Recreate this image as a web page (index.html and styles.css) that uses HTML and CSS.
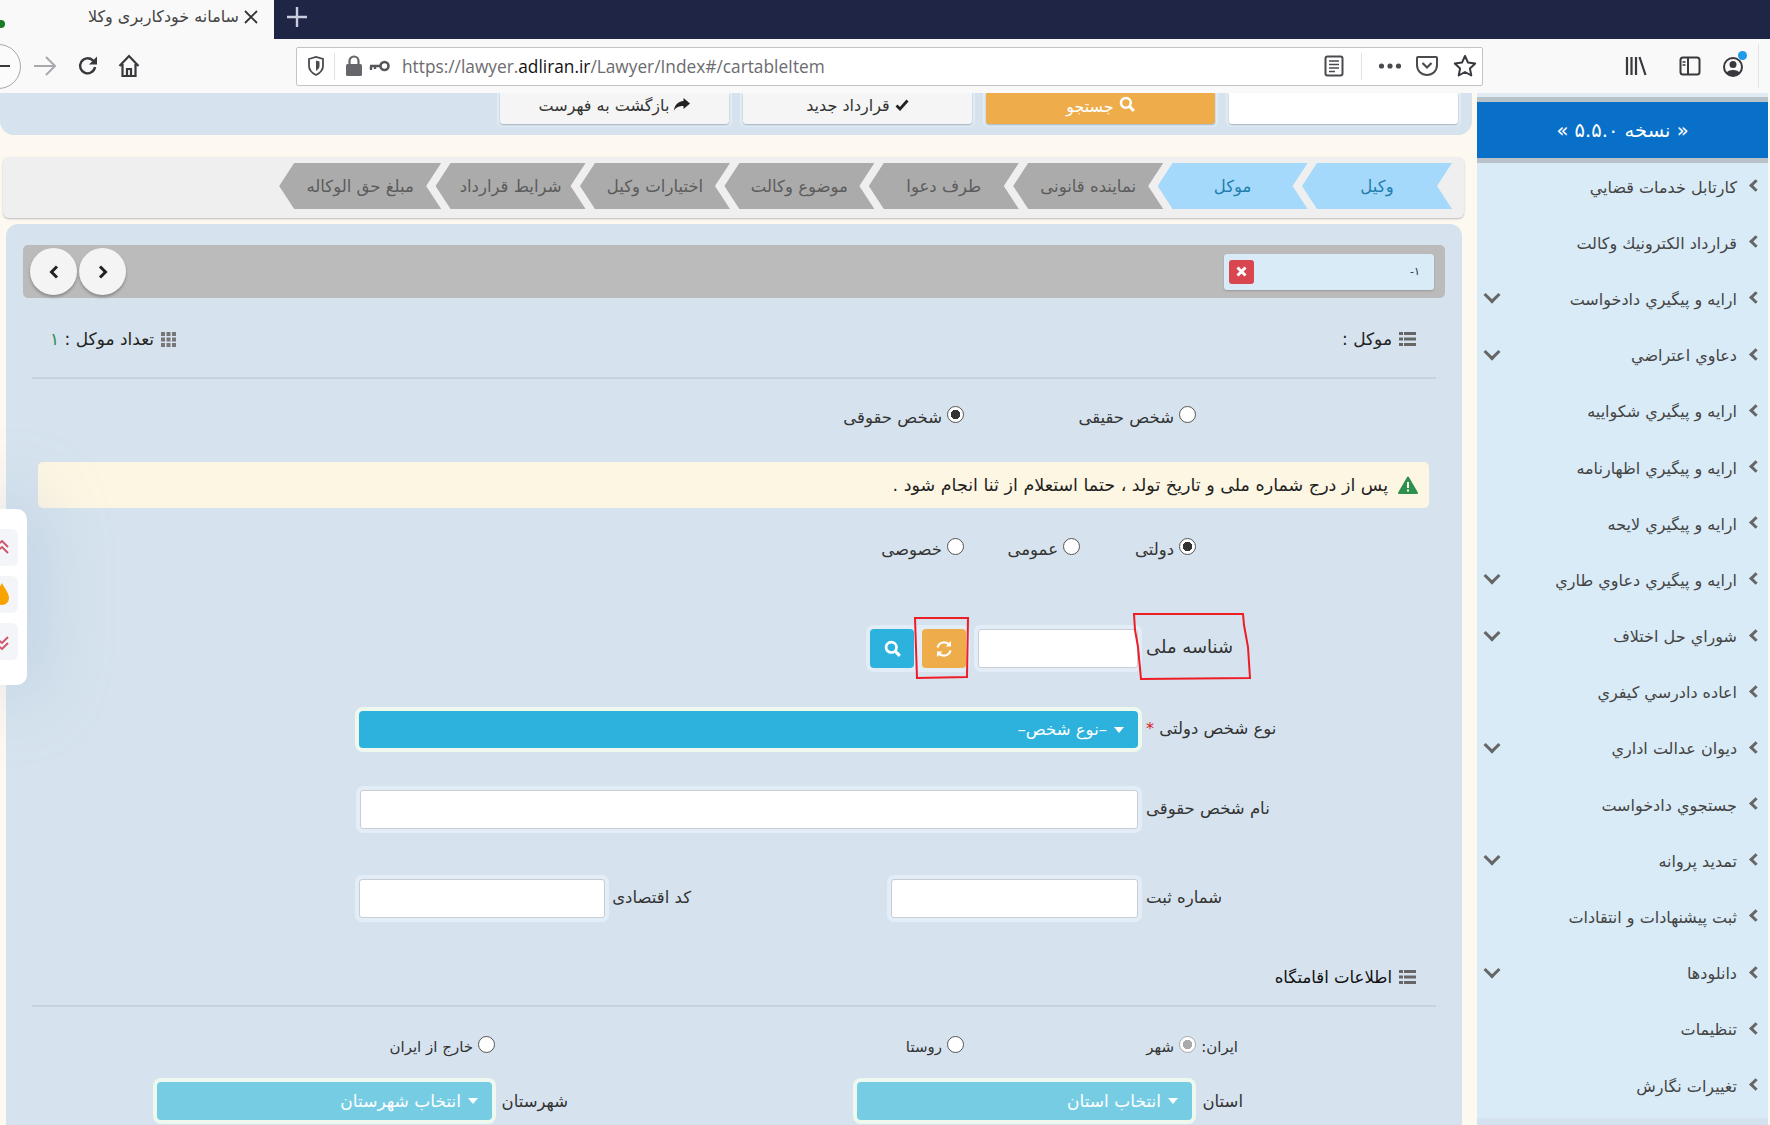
FILE: index.html
```html
<!DOCTYPE html>
<html lang="fa">
<head>
    <meta charset="UTF-8">
    <meta name="viewport" content="width=device-width, initial-scale=1.0">
    <title>سامانه خودکاربری وکلا</title>
    <link rel="stylesheet" href="styles.css">
</head>
<body>
    <div class="tabbar">
        <div class="tab">
            <span class="tab-title">سامانه خودکاربری وکلا</span>
            <svg class="tab-close" width="14" height="14" viewBox="0 0 14 14"><path d="M1 1l12 12M13 1L1 13" stroke="#333" stroke-width="1.8"/></svg>
            <span class="tab-favicon"></span>
        </div>
        <svg class="tab-new" width="20" height="20" viewBox="0 0 20 20"><path d="M10 0v20M0 10h20" stroke="#c9cede" stroke-width="2.4"/></svg>
    </div>

    <div class="toolbar">
        <div class="back-btn"><span class="back-dash"></span></div>
        <svg class="tool-forward" width="24" height="20" viewBox="0 0 24 20"><path d="M1 10h21M13 1l9 9-9 9" fill="none" stroke="#a9a9ad" stroke-width="2"/></svg>
        <svg class="tool-reload" width="22" height="22" viewBox="0 0 22 22"><path d="M18 12a7.5 7.5 0 1 1-2.2-6.6L18.500 8" fill="none" stroke="#38383d" stroke-width="2.400"/><path d="M20 1.500v8h-8z" fill="#38383d"/></svg>
        <svg class="tool-home" width="22" height="24" viewBox="0 0 22 24"><path d="M1.500 12L11 2l9.500 10M4.500 10v12h13V10M9 22v-7h4v7" fill="none" stroke="#38383d" stroke-width="2.200"/></svg>
        <div class="urlbar">
            <svg class="url-shield" width="16" height="20" viewBox="0 0 16 20"><path d="M1 3l7-2 7 2v7c0 4-3 7-7 9-4-2-7-5-7-9z" fill="none" stroke="#4a4a4f" stroke-width="1.800"/><path d="M8 4.500l3.500 1v4.500c0 2-1.500 3.500-3.500 5z" fill="#4a4a4f"/></svg>
            <span class="url-sep url-sep-left"></span>
            <svg class="url-lock" width="18" height="22" viewBox="0 0 18 22"><path d="M4.500 10V6a4.500 4.500 0 0 1 9 0v4" fill="none" stroke="#66666b" stroke-width="2.200"/><rect x="1" y="9" width="16" height="12" rx="1.500" fill="#66666b"/></svg>
            <svg class="url-key" width="22" height="12" viewBox="0 0 22 12"><circle cx="15.500" cy="6" r="4" fill="none" stroke="#55555a" stroke-width="2.600"/><path d="M11 6H1M2 6v4M6 6v3" stroke="#55555a" stroke-width="2.400" fill="none"/></svg>
            <span class="url-text">https://lawyer.<b>adliran.ir</b>/Lawyer/Index#/cartableItem</span>
            <svg class="url-reader" width="20" height="22" viewBox="0 0 20 22"><rect x="1.500" y="1.500" width="17" height="19" rx="2" fill="none" stroke="#4a4a4f" stroke-width="2"/><path d="M5 6h10M5 9.500h10M5 13h10M5 16.500h6" stroke="#4a4a4f" stroke-width="1.600"/></svg>
            <span class="url-sep url-sep-right"></span>
            <svg class="url-dots" width="24" height="6" viewBox="0 0 24 6"><circle cx="3.500" cy="3" r="2.600" fill="#4a4a4f"/><circle cx="12" cy="3" r="2.600" fill="#4a4a4f"/><circle cx="20.500" cy="3" r="2.600" fill="#4a4a4f"/></svg>
            <svg class="url-pocket" width="22" height="22" viewBox="0 0 22 22"><path d="M2 2h18a1 1 0 0 1 1 1v7c0 6-4.500 10-10 10S1 16 1 10V3a1 1 0 0 1 1-1z" fill="none" stroke="#4a4a4f" stroke-width="2"/><path d="M6.500 8l4.500 4.500L15.500 8" fill="none" stroke="#4a4a4f" stroke-width="2.200"/></svg>
            <svg class="url-star" width="24" height="24" viewBox="0 0 24 24"><path d="M12 2l3 6.600 7.200.9-5.300 4.900 1.400 7.100L12 18l-6.300 3.500 1.400-7.100L1.800 9.500 9 8.600z" fill="none" stroke="#38383d" stroke-width="2" stroke-linejoin="round"/></svg>
        </div>
        <svg class="tool-library" width="22" height="22" viewBox="0 0 22 22"><path d="M2 2v18M6.500 2v18M11 2v18M14.500 2l6 18" fill="none" stroke="#38383d" stroke-width="2.200"/></svg>
        <svg class="tool-sidebar" width="22" height="22" viewBox="0 0 22 22"><rect x="1.500" y="2.500" width="19" height="17" rx="2.500" fill="none" stroke="#38383d" stroke-width="2"/><path d="M9 3v16" stroke="#38383d" stroke-width="2"/><path d="M3.500 7h3M3.500 10h3" stroke="#38383d" stroke-width="1.400"/></svg>
        <div class="tool-account">
            <svg width="22" height="24" viewBox="0 0 22 24"><circle cx="11" cy="13" r="9" fill="none" stroke="#38383d" stroke-width="2"/><circle cx="11" cy="10.500" r="3.500" fill="#38383d"/><path d="M4.500 19c1-4 12-4 13 0-3 3-10 3-13 0z" fill="#38383d"/></svg>
            <span class="account-dot"></span>
        </div>
        <span class="tool-sep"></span>
    </div>

    <div class="page">
        <div class="content">
            <div class="top-actions">
                <input class="top-input" type="text">
                <button class="top-btn top-btn-orange"><svg class="ico-search" width="16" height="16" viewBox="0 0 14 14"><circle cx="6" cy="6" r="4.300" fill="none" stroke="#fff" stroke-width="2.200"/><path d="M9 9l4 4" stroke="#fff" stroke-width="2.600"/></svg> جستجو</button>
                <button class="top-btn"><svg width="14" height="12" viewBox="0 0 14 12"><path d="M1.500 6.500l3.500 3.500 7.500-8.500" fill="none" stroke="#222" stroke-width="2.800"/></svg> قرارداد جدید</button>
                <button class="top-btn"><svg width="16" height="13" viewBox="0 0 16 13"><path d="M9.500 0L16 5.500 9.500 11V8C5 8 2.500 9 0 12.500 .5 7 4 3.500 9.500 3z" fill="#222"/></svg> بازگشت به فهرست</button>
            </div>

            <div class="steps">
                <div class="step step-done">وکیل</div>
                <div class="step step-done">موکل</div>
                <div class="step">نماینده قانونی</div>
                <div class="step">طرف دعوا</div>
                <div class="step">موضوع وکالت</div>
                <div class="step">اختیارات وکیل</div>
                <div class="step">شرایط قرارداد</div>
                <div class="step">مبلغ حق الوکاله</div>
            </div>

            <div class="panel">
                <div class="pager">
                    <div class="chip">
                        <span class="chip-text">۱-</span>
                        <span class="chip-remove"><svg width="11" height="11" viewBox="0 0 11 11"><path d="M1.500 1.500l8 8M9.500 1.500l-8 8" stroke="#fff" stroke-width="3"/></svg></span>
                    </div>
                    <div class="pager-nav">
                        <button class="round-btn"><svg width="10" height="14" viewBox="0 0 10 14"><path d="M2 1.500L7.500 7 2 12.500" fill="none" stroke="#222" stroke-width="3"/></svg></button>
                        <button class="round-btn"><svg width="10" height="14" viewBox="0 0 10 14"><path d="M8 1.500L2.500 7 8 12.500" fill="none" stroke="#222" stroke-width="3"/></svg></button>
                    </div>
                </div>

                <div class="section-head section-head-first">
                    <div class="head-title">
                        <svg width="17" height="14" viewBox="0 0 17 14"><path d="M0 0h4v3H0zM5 0h12v3H5zM0 5.500h4v3H0zM5 5.500h12v3H5zM0 11h4v3H0zM5 11h12v3H5z" fill="#666"/></svg>
                        <span>موکل :</span>
                    </div>
                    <div class="head-title">
                        <svg width="15" height="15" viewBox="0 0 15 15"><path d="M0 0h4v4H0zM5.500 0h4v4h-4zM11 0h4v4h-4zM0 5.500h4v4H0zM5.500 5.500h4v4h-4zM11 5.500h4v4h-4zM0 11h4v4H0zM5.500 11h4v4h-4zM11 11h4v4h-4z" fill="#777"/></svg>
                        <span>تعداد موکل : <em class="count">۱</em></span>
                    </div>
                </div>

                <div class="radio-row radio-row-person">
                    <label class="radio-opt"><input type="radio" name="person"> شخص حقیقی</label>
                    <label class="radio-opt"><input type="radio" name="person" checked> شخص حقوقی</label>
                </div>

                <div class="alert">
                    <svg width="20" height="18" viewBox="0 0 20 18"><path d="M10 1.500L19 17H1z" fill="#2f8f4e" stroke="#2f8f4e" stroke-width="2" stroke-linejoin="round"/><path d="M10 6v6M10 13.500v2" stroke="#fdf6e3" stroke-width="2"/></svg>
                    <span>پس از درج شماره ملی و تاریخ تولد ، حتما استعلام از ثنا انجام شود .</span>
                </div>

                <div class="radio-row radio-row-kind">
                    <label class="radio-opt"><input type="radio" name="kind" checked> دولتی</label>
                    <label class="radio-opt"><input type="radio" name="kind"> عمومی</label>
                    <label class="radio-opt"><input type="radio" name="kind"> خصوصی</label>
                </div>

                <div class="form-row form-row-id">
                    <label class="field-label">شناسه ملی</label>
                    <input class="field-input field-id" type="text">
                    <div class="id-actions">
                        <button class="square-btn square-orange"><svg width="18" height="18" viewBox="0 0 18 18"><path d="M2.500 7.500A6.800 6.800 0 0 1 14.500 5M15.500 10.500A6.800 6.800 0 0 1 3.500 13" fill="none" stroke="#fff" stroke-width="2.200"/><path d="M16 1v5.500h-5.500zM2 17v-5.500h5.500z" fill="#fff"/></svg></button>
                        <button class="square-btn square-blue"><svg width="17" height="17" viewBox="0 0 14 14"><circle cx="6" cy="6" r="4.300" fill="none" stroke="#fff" stroke-width="2.200"/><path d="M9 9l4 4" stroke="#fff" stroke-width="2.600"/></svg></button>
                    </div>
                </div>

                <div class="form-row form-row-type">
                    <label class="field-label">نوع شخص دولتی <i class="required">*</i></label>
                    <div class="select select-main"><span class="caret"></span> –نوع شخص–</div>
                </div>

                <div class="form-row form-row-name">
                    <label class="field-label">نام شخص حقوقی</label>
                    <input class="field-input field-full" type="text">
                </div>

                <div class="form-row form-row-reg">
                    <label class="field-label">شماره ثبت</label>
                    <input class="field-input field-half" type="text">
                    <label class="label-eco">کد اقتصادی</label>
                    <input class="field-input field-eco" type="text">
                </div>

                <div class="section-head section-head-address">
                    <div class="head-title">
                        <svg width="17" height="14" viewBox="0 0 17 14"><path d="M0 0h4v3H0zM5 0h12v3H5zM0 5.500h4v3H0zM5 5.500h12v3H5zM0 11h4v3H0zM5 11h12v3H5z" fill="#666"/></svg>
                        <span class="head-strong">اطلاعات اقامتگاه</span>
                    </div>
                </div>

                <div class="radio-row radio-row-place">
                    <span class="place-label">ایران:</span>
                    <label class="radio-opt"><input class="radio-muted" type="radio" name="place" checked> شهر</label>
                    <label class="radio-opt"><input type="radio" name="place"> روستا</label>
                    <label class="radio-opt"><input type="radio" name="place"> خارج از ایران</label>
                </div>

                <div class="form-row form-row-city">
                    <label class="label-province">استان</label>
                    <div class="select select-light"><span class="caret"></span> انتخاب استان</div>
                    <label class="label-county">شهرستان</label>
                    <div class="select select-light"><span class="caret"></span> انتخاب شهرستان</div>
                </div>
            </div>
        </div>

        <aside class="sidebar">
            <div class="version">« نسخه ۵.۵.۰ »</div>
            <ul class="menu">
                <li class="menu-item"><span class="menu-chev"></span><span>كارتابل خدمات قضايي</span></li>
                <li class="menu-item"><span class="menu-chev"></span><span>قرارداد الكترونيك وكالت</span></li>
                <li class="menu-item has-sub"><span class="menu-chev"></span><span>ارايه و پيگيري دادخواست</span></li>
                <li class="menu-item has-sub"><span class="menu-chev"></span><span>دعاوي اعتراضي</span></li>
                <li class="menu-item"><span class="menu-chev"></span><span>ارايه و پيگيري شكواييه</span></li>
                <li class="menu-item"><span class="menu-chev"></span><span>ارايه و پيگيري اظهارنامه</span></li>
                <li class="menu-item"><span class="menu-chev"></span><span>ارايه و پيگيري لايحه</span></li>
                <li class="menu-item has-sub"><span class="menu-chev"></span><span>ارايه و پيگيري دعاوي طاري</span></li>
                <li class="menu-item has-sub"><span class="menu-chev"></span><span>شوراي حل اختلاف</span></li>
                <li class="menu-item"><span class="menu-chev"></span><span>اعاده دادرسي كيفري</span></li>
                <li class="menu-item has-sub"><span class="menu-chev"></span><span>ديوان عدالت اداري</span></li>
                <li class="menu-item"><span class="menu-chev"></span><span>جستجوي دادخواست</span></li>
                <li class="menu-item has-sub"><span class="menu-chev"></span><span>تمديد پروانه</span></li>
                <li class="menu-item"><span class="menu-chev"></span><span>ثبت پيشنهادات و انتقادات</span></li>
                <li class="menu-item has-sub"><span class="menu-chev"></span><span>دانلودها</span></li>
                <li class="menu-item"><span class="menu-chev"></span><span>تنظيمات</span></li>
                <li class="menu-item"><span class="menu-chev"></span><span>تغييرات نگارش</span></li>
            </ul>
        </aside>
    </div>

    <!-- floating shortcuts, cut off by the window edge -->
    <div class="float-card">
        <div class="float-tile"><svg width="14" height="18" viewBox="0 0 14 18"><path d="M0 8l7-6 6 6M0 14l7-6 6 6" fill="none" stroke="#d0566a" stroke-width="2"/></svg></div>
        <div class="float-tile"><svg width="14" height="24" viewBox="0 0 14 24"><path d="M7 0c3 6 7 10 7 15a7 7 0 0 1-14 0c0-5 4-9 7-15z" fill="#f9a300"/></svg></div>
        <div class="float-tile"><svg width="14" height="18" viewBox="0 0 14 18"><path d="M0 4l7 6 6-6M0 10l7 6 6-6" fill="none" stroke="#d0566a" stroke-width="2"/></svg></div>
    </div>

    <!-- red marks someone drew on the screenshot -->
    <svg class="marks" width="1770" height="1125" viewBox="0 0 1770 1125">
        <path d="M915 618L968 618 967 677 917 678z" fill="none" stroke="#ee1c25" stroke-width="2"/>
        <path d="M1134 614L1243 614 1244 625 1248 647 1250 678 1141 679 1138 647 1135 630z" fill="none" stroke="#ee1c25" stroke-width="2"/>
    </svg>
</body>
</html>
```

FILE: styles.css
```css
* {
    box-sizing: border-box;
}

html, body {
    margin: 0;
    height: 1125px;
    overflow: hidden;
}

body {
    position: relative;
    background-color: #fdf8f0;
    color: #333;
    font-family: "DejaVu Sans", sans-serif;
    font-size: 16px;
}

button, input {
    font-family: inherit;
}

/* browser chrome */
.tabbar {
    display: flex;
    align-items: center;
    height: 39px;
    padding-bottom: 6px;
    background: #1f2544;
}

.tab {
    display: flex;
    align-items: center;
    position: relative;
    width: 274px;
    height: 39px;
    margin-bottom: -6px;
    padding: 0 0 6px 92px;
    background: #f9f9fa;
}

.tab-title {
    width: 147px;
    font-size: 16px;
    color: #444;
    direction: rtl;
    white-space: nowrap;
}

.tab-close {
    margin-left: 5px;
}

.tab-favicon {
    position: absolute;
    left: -3px;
    top: 20px;
    width: 8px;
    height: 8px;
    border-radius: 50%;
    background: #1c7a25;
}

.tab-new {
    margin-left: 13px;
}

.toolbar {
    display: flex;
    align-items: center;
    height: 54px;
    background: #f9f9fa;
}

.back-btn {
    display: flex;
    align-items: center;
    justify-content: flex-end;
    flex: none;
    width: 45px;
    height: 45px;
    margin-left: -24px;
    padding-right: 10px;
    border: 1px solid #a8a8ac;
    border-radius: 50%;
    background: #fbfbfc;
}

.back-dash {
    width: 11px;
    height: 2px;
    background: #38383d;
}

.tool-forward {
    margin-left: 12px;
}

.tool-reload {
    margin-left: 20px;
}

.tool-home {
    margin-left: 19px;
}

.urlbar {
    display: flex;
    align-items: center;
    width: 1187px;
    height: 39px;
    margin-left: 156px;
    padding-left: 11px;
    border: 1px solid #c4c4c8;
    border-radius: 2px;
    background: #fff;
}

.url-sep {
    flex: none;
    width: 1px;
    height: 27px;
    background: #e2e2e4;
}

.url-sep-left {
    margin-left: 10px;
}

.url-sep-right {
    margin-left: 17px;
}

.url-lock {
    margin-left: 10px;
}

.url-key {
    margin-left: 6px;
}

.url-text {
    margin-left: 11px;
    width: 922px;
    font-family: "Open Sans", sans-serif;
    font-size: 17.300px;
    color: #6b6b70;
    white-space: nowrap;
}

.url-text b {
    font-weight: 400;
    color: #111;
}

.url-dots {
    margin-left: 16px;
}

.url-pocket {
    margin-left: 14px;
}

.url-star {
    margin-left: 15px;
}

.tool-library {
    margin-left: 142px;
}

.tool-sidebar {
    margin-left: 32px;
}

.tool-account {
    position: relative;
    display: flex;
    margin-left: 21px;
}

.account-dot {
    position: absolute;
    right: -3px;
    top: -3px;
    width: 9px;
    height: 9px;
    border-radius: 50%;
    background: #1e9be8;
}

.tool-sep {
    width: 1px;
    height: 44px;
    margin-left: 14px;
    background: #e4e4e6;
}

/* page */
.page {
    display: flex;
    height: 1032px;
    overflow: hidden;
}

.content {
    width: 1477px;
    flex: none;
}

.top-actions {
    display: flex;
    direction: rtl;
    gap: 14px;
    width: 1472px;
    height: 42px;
    padding-right: 14px;
    background: #d6e3ee;
    border-radius: 0 0 14px 14px;
}

.top-input, .top-btn {
    width: 229px;
    height: 31px;
    border: 0;
    border-radius: 0 0 3px 3px;
    box-shadow: 0 1px 2px #9fb0bf, 0 0 0 3px #e3edf6;
}

.top-input {
    background: #fff;
}

.top-btn {
    padding: 0 0 6px;
    background: #f5f5f5;
    color: #333;
    font-size: 16px;
}

.top-btn-orange {
    background: #efac4a;
    color: #fff;
}

.steps {
    display: flex;
    direction: rtl;
    width: 1461px;
    height: 61px;
    margin: 22px 0 0 3px;
    padding: 6px 12px 0 0;
    background: #efefef;
    border-radius: 6px;
    box-shadow: 0 1px 2px #bbb;
    font-size: 16.500px;
}

.step {
    flex: none;
    display: flex;
    align-items: center;
    justify-content: center;
    width: 150px;
    height: 46px;
    margin-left: -5.600px;
    background: #ababab;
    color: #5b5b5b;
    clip-path: polygon(15px 0, 100% 0, calc(100% - 15px) 50%, 100% 100%, 15px 100%, 0 50%);
}

.step:last-child {
    width: 162px;
}

.step-done {
    background: #a5d9fb;
    color: #1f7fae;
}

.panel {
    width: 1456px;
    height: 901px;
    margin: 6px 0 0 6px;
    padding: 21px 17px 0;
    background: #d6e3ee;
    border-radius: 12px 12px 0 0;
    direction: rtl;
}

.pager {
    display: flex;
    justify-content: space-between;
    align-items: center;
    height: 53px;
    padding: 0 11px 0 7px;
    background: #bbb;
    border-radius: 5px;
}

.chip {
    display: flex;
    align-items: center;
    justify-content: space-between;
    width: 210px;
    height: 36px;
    padding: 0 14px 0 5px;
    background: #d9ebf7;
    border-radius: 3px;
    box-shadow: 0 1px 2px #999;
    font-size: 11px;
}

.chip-remove {
    display: flex;
    align-items: center;
    justify-content: center;
    width: 25px;
    height: 24px;
    background: #d9464f;
    border-radius: 3px;
}

.pager-nav {
    display: flex;
    gap: 2px;
}

.round-btn {
    display: flex;
    align-items: center;
    justify-content: center;
    width: 47px;
    height: 47px;
    padding: 0;
    border: 0;
    border-radius: 50%;
    background: #f4f4f4;
    box-shadow: 0 2px 3px #888;
}

.section-head {
    display: flex;
    justify-content: space-between;
    margin: 0 9px;
    padding: 0 20px 0 18px;
    border-bottom: 2px solid #c5d3e0;
}

.section-head-first {
    margin-top: 22px;
    padding-bottom: 19px;
    height: 59px;
}

.section-head-address {
    margin-top: 40px;
    height: 49px;
    padding-bottom: 11px;
}

.head-title {
    display: flex;
    align-items: center;
    gap: 7px;
    height: 38px;
    color: #222;
    font-size: 17px;
}

.head-strong {
    font-size: 16.500px;
    color: #111;
}

.count {
    font-style: normal;
    color: #2f8f4e;
}

.radio-row {
    display: flex;
    align-items: flex-start;
    height: 24px;
    font-size: 16.500px;
}

.radio-row-person {
    margin-top: 29px;
    padding-right: 249px;
}

.radio-row-person .radio-opt {
    width: 232px;
}

.radio-row-kind {
    margin-top: 32px;
    padding-right: 249px;
}

.radio-row-kind .radio-opt {
    width: 116px;
}

.radio-row-place {
    margin-top: 31px;
    padding-right: 207px;
    font-size: 15px;
}

.place-label {
    width: 42px;
    white-space: nowrap;
}

.radio-row-place .radio-opt {
    width: 232px;
}

.radio-row-place .radio-opt:last-child {
    width: 200px;
    margin-right: 237px;
}

.radio-opt {
    display: flex;
    align-items: flex-start;
    gap: 5px;
    white-space: nowrap;
}

.radio-opt input {
    appearance: none;
    flex: none;
    width: 17px;
    height: 17px;
    margin: -2px 0 0;
    border: 1.500px solid #555;
    border-radius: 50%;
    background: #fff;
}

.radio-opt input:checked {
    background: radial-gradient(circle, #333 0 4.500px, #fff 5px);
}

.radio-opt input.radio-muted {
    border-color: #aaa;
    background: radial-gradient(circle, #aaa 0 4.500px, #fff 5px);
}

.alert {
    display: flex;
    align-items: center;
    gap: 10px;
    height: 46px;
    margin: 30px 16px 0 15px;
    padding-right: 11px;
    background: #fdf6e3;
    border-radius: 5px;
    color: #222;
    font-size: 17.500px;
}

.form-row {
    display: flex;
    align-items: center;
    padding-right: 155px;
    font-size: 16.500px;
}

.field-label {
    width: 144px;
    margin-left: 8px;
    padding-bottom: 2px;
    text-align: left;
    color: #333;
    white-space: nowrap;
}

.field-input {
    height: 39px;
    border: 1px solid #c9ced4;
    border-radius: 3px;
    background: #fff;
    box-shadow: 0 0 0 4px #e3edf7;
}

.form-row-id {
    margin-top: 65px;
}

.form-row-id .field-label {
    padding-bottom: 5px;
    font-size: 18px;
}

.field-id {
    width: 160px;
    margin-left: 12px;
}

.id-actions {
    display: flex;
    gap: 8px;
    background: #e3edf7;
    border-radius: 4px;
    box-shadow: 0 0 0 4px #e3edf7;
}

.square-btn {
    display: flex;
    align-items: center;
    justify-content: center;
    width: 44px;
    height: 39px;
    padding: 0;
    border: 0;
    border-radius: 4px;
}

.square-orange {
    background: #efac4a;
}

.square-blue {
    background: #2cb2dc;
}

.form-row-type {
    margin-top: 43px;
}

.required {
    color: #d9222a;
    font-style: normal;
    font-size: 16px;
}

.select {
    display: flex;
    align-items: center;
    gap: 7px;
    border-radius: 4px;
    color: #fff;
}

.select-main {
    width: 779px;
    height: 37px;
    padding-right: 14px;
    background: #2cb2dc;
    box-shadow: 0 0 0 4px #eef8ee;
}

.select-light {
    width: 335px;
    height: 38px;
    padding-right: 14px;
    background: #76cde3;
    box-shadow: 0 0 0 4px #eef8ee;
    font-size: 17px;
}

.caret {
    width: 0;
    height: 0;
    border-left: 5px solid transparent;
    border-right: 5px solid transparent;
    border-top: 6px solid #fff;
}

.form-row-name {
    margin-top: 42px;
}

.field-full {
    width: 778px;
}

.form-row-reg {
    margin-top: 50px;
}

.field-half {
    width: 247px;
}

.label-eco {
    width: 76px;
    margin-right: 200px;
    padding-bottom: 2px;
    white-space: nowrap;
}

.field-eco {
    width: 246px;
    margin-right: 10px;
}

.form-row-city {
    margin-top: 20px;
    padding-right: 202px;
}

.label-province {
    width: 41px;
    margin-left: 10px;
    white-space: nowrap;
}

.label-county {
    width: 68px;
    margin: 0 289px 0 8px;
    white-space: nowrap;
}

/* sidebar */
.sidebar {
    width: 291px;
    height: 1032px;
    border-top: 4px solid #dfeaf3;
    background: #d3e2ee;
    direction: rtl;
    flex: none;
}

.version {
    display: flex;
    align-items: center;
    justify-content: center;
    height: 66px;
    border-top: 5px solid #b9c2c9;
    border-bottom: 5px solid #b9c2c9;
    background: #0870c8;
    color: #fff;
    font-size: 19.500px;
}

.menu {
    list-style: none;
    margin: 0;
    padding: 0;
    background: #d9ebf7;
}

.menu-item {
    position: relative;
    display: flex;
    align-items: center;
    height: 56.200px;
    padding: 0 31px 8px 0;
    color: #444;
    white-space: nowrap;
}

.menu-chev {
    position: absolute;
    right: 8px;
    top: 18px;
    width: 9px;
    height: 9px;
    border-left: 3.500px solid #666;
    border-bottom: 3.500px solid #666;
    transform: rotate(45deg);
}

.has-sub::after {
    content: "";
    position: absolute;
    left: 9px;
    top: 14px;
    width: 9px;
    height: 9px;
    border-right: 3.500px solid #666;
    border-bottom: 3.500px solid #666;
    transform: rotate(45deg);
}

/* floating card */
.float-card {
    position: absolute;
    left: 0;
    top: 509px;
    display: flex;
    flex-direction: column;
    gap: 10px;
    width: 27px;
    height: 176px;
    padding-top: 20px;
    background: #fff;
    border-radius: 0 10px 10px 0;
    box-shadow: 0 0 70px 10px rgba(150, 175, 205, .4);
}

.float-tile {
    display: flex;
    align-items: center;
    justify-content: flex-end;
    width: 18px;
    height: 37px;
    padding-right: 9px;
    background: #f3f5f9;
    border-radius: 0 6px 6px 0;
}

.float-tile svg {
    flex: none;
}

.marks {
    position: absolute;
    left: 0;
    top: 0;
    pointer-events: none;
}
```
